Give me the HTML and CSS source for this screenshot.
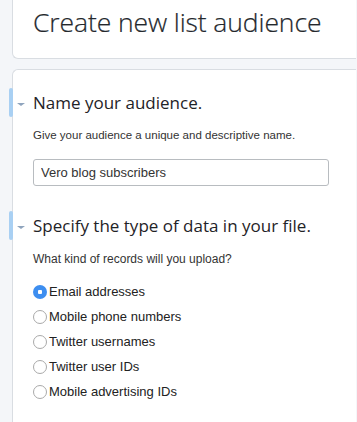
FILE: index.html
```html
<!DOCTYPE html>
<html lang="en">
<head>
    <meta charset="UTF-8">
    <meta name="viewport" content="width=device-width, initial-scale=1.0">
    <title>Create new list audience</title>
    <link rel="stylesheet" href="styles.css">
</head>
<body>
    <div class="page-header">
        <h1>Create new list audience</h1>
    </div>

    <div class="audience-form">
        <div class="step">
            <h2><span class="caret"></span>Name your audience.</h2>
            <p>Give your audience a unique and descriptive name.</p>
            <input type="text" class="name-input" value="Vero blog subscribers">
        </div>

        <div class="step">
            <h2><span class="caret"></span>Specify the type of data in your file.</h2>
            <p class="question">What kind of records will you upload?</p>
            <div class="options">
                <label class="option"><input type="radio" name="kind" checked><span>Email addresses</span></label>
                <label class="option"><input type="radio" name="kind"><span>Mobile phone numbers</span></label>
                <label class="option"><input type="radio" name="kind"><span>Twitter usernames</span></label>
                <label class="option"><input type="radio" name="kind"><span>Twitter user IDs</span></label>
                <label class="option"><input type="radio" name="kind"><span>Mobile advertising IDs</span></label>
            </div>
        </div>
    </div>
</body>
</html>
```

FILE: styles.css
```css
* {
    margin: 0;
    padding: 0;
    box-sizing: border-box;
    -webkit-font-smoothing: antialiased;
}

body {
    font-family: 'Liberation Sans', Arial, sans-serif;
    background: #f4f6f9;
    color: #222;
    padding-left: 12px;
    padding-right: 1px;
    height: 100vh;
    overflow: hidden;
    display: flex;
    flex-direction: column;
}

.page-header {
    background: #fff;
    border: 1px solid #d9dde2;
    border-top: none;
    border-right: none;
    border-radius: 0 0 0 6px;
    height: 59px;
    flex-shrink: 0;
    padding: 4px 0 0 20px;
}

.page-header h1 {
    font-family: 'Open Sans', sans-serif;
    font-weight: 300;
    font-size: 26.5px;
    letter-spacing: -0.1px;
    color: #24282d;
    -webkit-text-stroke: 0.2px #24282d;
}

.audience-form {
    flex: 1;
    background: #fff;
    border: 1px solid #d9dde2;
    border-right: none;
    border-bottom: none;
    border-radius: 6px 0 0 0;
    margin-top: 10px;
    padding-top: 18px;
}

.step {
    padding-left: 20px;
    margin-bottom: 25px;
}

.step h2 {
    position: relative;
    font-family: 'Open Sans', sans-serif;
    font-weight: 400;
    font-size: 17px;
    color: #1f2327;
    line-height: 29px;
}

.step h2::before {
    content: "";
    position: absolute;
    left: -24px;
    top: 0;
    width: 4px;
    height: 29px;
    background: #a9d0f3;
    border-radius: 3px;
}

.caret {
    position: absolute;
    left: -16px;
    top: 15px;
    width: 0;
    height: 0;
    border-left: 4px solid transparent;
    border-right: 4px solid transparent;
    border-top: 3px solid #8fa4bd;
}

.step p {
    font-size: 11.5px;
    color: #333;
    margin-top: 11px;
    line-height: 14px;
}

.step .question {
    font-size: 12px;
    margin-top: 12px;
}

.name-input {
    display: block;
    width: 296px;
    height: 27px;
    margin-top: 17px;
    border: 1px solid #b8bcc0;
    border-radius: 3px;
    padding: 0 7px;
    font-family: 'Liberation Sans', Arial, sans-serif;
    font-size: 13px;
    color: #333;
    outline: none;
}

.options {
    margin-top: 16px;
    display: flex;
    flex-direction: column;
    gap: 6px;
}

.option {
    display: flex;
    align-items: center;
    height: 19px;
    font-size: 13px;
    color: #222;
}

.option input {
    appearance: none;
    width: 14px;
    height: 14px;
    border: 1px solid #a9a9a9;
    border-radius: 50%;
    background: #fff;
    margin-right: 2px;
}

.option input:checked {
    border: none;
    background: radial-gradient(circle, #fff 0 2px, #3d8ef0 2.5px);
}
```
